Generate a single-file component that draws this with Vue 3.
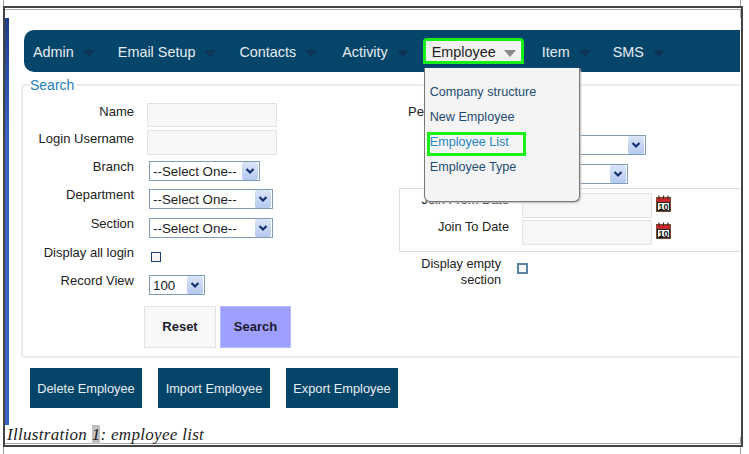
<script setup>
const navItems = [
  { label: 'Admin', gap: 23 },
  { label: 'Email Setup', gap: 23 },
  { label: 'Contacts', gap: 25 },
  { label: 'Activity', gap: 14 },
  { label: 'Employee', gap: 18, active: true },
  { label: 'Item', gap: 22 },
  { label: 'SMS', gap: 0 },
]
const menu = [
  { label: 'Company structure' },
  { label: 'New Employee' },
  { label: 'Employee List', current: true },
  { label: 'Employee Type' },
]
const actions = ['Delete Employee', 'Import Employee', 'Export Employee']
</script>

<template>
  <div class="page">
    <div class="frame">
      <div class="inner">
        <div class="bar"></div>
        <main class="main">
          <nav class="nav">
            <div
              v-for="item in navItems"
              :key="item.label"
              class="nav-item"
              :class="{ active: item.active }"
              :style="{ marginRight: item.gap + 'px' }"
            >
              <span class="nav-text">{{ item.label }}</span>
              <i class="tri"></i>
              <div v-if="item.active" class="drop">
                <a
                  v-for="m in menu"
                  :key="m.label"
                  class="drop-item"
                  :class="{ current: m.current }"
                >{{ m.label }}</a>
              </div>
            </div>
          </nav>

          <fieldset class="search">
            <legend>Search</legend>
            <div class="cols">
              <div class="col-left">
                <div class="row h27"><label>Name</label><div class="input"></div></div>
                <div class="row h31"><label>Login Username</label><div class="input tall"></div></div>
                <div class="row h28 up">
                  <label>Branch</label>
                  <div class="select w111"><span>--Select One--</span><b class="arrow"><svg viewBox="0 0 16 18" width="16" height="18"><path d="M4.5 7l3.5 3.5L11.500 7" fill="none" stroke="#13306e" stroke-width="2.200"/></svg></b></div>
                </div>
                <div class="row h29 up">
                  <label>Department</label>
                  <div class="select w124"><span>--Select One--</span><b class="arrow"><svg viewBox="0 0 16 18" width="16" height="18"><path d="M4.5 7l3.5 3.5L11.500 7" fill="none" stroke="#13306e" stroke-width="2.200"/></svg></b></div>
                </div>
                <div class="row h29 up">
                  <label>Section</label>
                  <div class="select w124"><span>--Select One--</span><b class="arrow"><svg viewBox="0 0 16 18" width="16" height="18"><path d="M4.5 7l3.5 3.5L11.500 7" fill="none" stroke="#13306e" stroke-width="2.200"/></svg></b></div>
                </div>
                <div class="row h28 up">
                  <label>Display all login</label>
                  <div class="check left-check"></div>
                </div>
                <div class="row h31 up">
                  <label>Record View</label>
                  <div class="select w56"><span>100</span><b class="arrow"><svg viewBox="0 0 16 18" width="16" height="18"><path d="M4.5 7l3.5 3.5L11.500 7" fill="none" stroke="#13306e" stroke-width="2.200"/></svg></b></div>
                </div>
                <div class="btns">
                  <button class="btn reset">Reset</button>
                  <button class="btn go">Search</button>
                </div>
              </div>

              <div class="col-right">
                <div class="r1"><label>Pe</label></div>
                <div class="r2">
                  <div class="select w153"><span>--Select One--</span><b class="arrow"><svg viewBox="0 0 16 18" width="16" height="18"><path d="M4.5 7l3.5 3.5L11.500 7" fill="none" stroke="#13306e" stroke-width="2.200"/></svg></b></div>
                </div>
                <div class="r3">
                  <div class="select w135"><span>--Select One--</span><b class="arrow"><svg viewBox="0 0 16 18" width="16" height="18"><path d="M4.5 7l3.5 3.5L11.500 7" fill="none" stroke="#13306e" stroke-width="2.200"/></svg></b></div>
                </div>
                <div class="dates">
                  <div class="date-row">
                    <label>Join From Date</label><div class="input tall"></div>
                    <svg class="cal" viewBox="0 0 15 17" width="15" height="17"><rect x=".5" y="2.500" width="14" height="14" fill="#fff" stroke="#7a4a30"/><rect x="1" y="3" width="13" height="4" fill="#c8252c"/><path d="M3 .5v3.500M7.500 .5v3.500M12 .5v3.500" stroke="#4a2a22" stroke-width="1.300"/><rect x="1.500" y="7.500" width="12" height="8" fill="#fff" stroke="#222"/><text x="7.500" y="15" text-anchor="middle" class="cal-t">10</text></svg>
                  </div>
                  <div class="date-row">
                    <label>Join To Date</label><div class="input tall"></div>
                    <svg class="cal" viewBox="0 0 15 17" width="15" height="17"><rect x=".5" y="2.500" width="14" height="14" fill="#fff" stroke="#7a4a30"/><rect x="1" y="3" width="13" height="4" fill="#c8252c"/><path d="M3 .5v3.500M7.500 .5v3.500M12 .5v3.500" stroke="#4a2a22" stroke-width="1.300"/><rect x="1.500" y="7.500" width="12" height="8" fill="#fff" stroke="#222"/><text x="7.500" y="15" text-anchor="middle" class="cal-t">10</text></svg>
                  </div>
                </div>
                <div class="empty">
                  <label>Display empty<br />section</label>
                  <div class="check blue-check"></div>
                </div>
              </div>
            </div>
          </fieldset>

          <div class="actions">
            <button v-for="a in actions" :key="a" class="action">{{ a }}</button>
          </div>
        </main>
      </div>
      <div class="caption"><em>Illustration <span class="num">1</span>: employee list</em></div>
    </div>
  </div>
</template>

<style>
html, body { margin: 0; background: #fff; overflow: hidden; }
</style>

<style scoped>
.page {
  box-sizing: border-box;
  width: 738px;
  height: 454px;
  margin-left: 3px;
  padding-top: 6px;
  border-left: 1px solid #999;
  border-right: 1px solid #999;
  font-family: "Liberation Sans", Arial, sans-serif;
  font-size: 13px;
  color: #222;
}
.frame {
  box-sizing: border-box;
  position: relative;
  height: 441px;
  margin: 0 -3px 0 -1px;
  border: 2px solid #444;
  background: #fff;
}
.inner {
  display: flex;
  box-sizing: border-box;
  height: 435px;
  border: 1px solid #aaa;
  border-width: 1px 1px 0 0;
  margin-top: 1px;
  padding-top: 8px;
}
.bar {
  flex: none;
  width: 4px;
  height: 407px;
  background: linear-gradient(#1c3f8a, #3a64c4 30%, #3a64c4);
}
.main {
  flex: 1;
  min-width: 0;
  height: 407px;
  padding: 12px 0 0 15px;
  margin-right: -1px;
  background: #fff;
}
.nav {
  box-sizing: border-box;
  display: flex;
  align-items: center;
  height: 42px;
  padding-left: 9px;
  margin-right: 1px;
  background: #05456a;
  border-radius: 10px 0 0 10px;
  color: #e6edf2;
  font-size: 14.400px;
}
.nav-item { position: relative; display: flex; align-items: center; }
.nav-text { padding-top: 2px; }
.tri {
  display: block;
  width: 0;
  height: 0;
  margin-left: 9px;
  margin-top: 5px;
  border-style: solid;
  border-width: 7px 6.500px 0;
  border-color: #0e3556 transparent transparent;
}
.active {
  box-sizing: border-box;
  height: 26px;
  padding: 0 5px 0 6px;
  border: 3px solid #18f018;
  border-radius: 4px 4px 0 0;
  background: #f2f2f2;
  color: #222;
}
.active .tri { border-top-color: #888; margin-left: 8px; }
.drop {
  position: absolute;
  z-index: 2;
  top: 27px;
  left: -2px;
  box-sizing: border-box;
  width: 156px;
  height: 134px;
  padding: 14px 0 0 3px;
  background: #f4f4f4;
  border: 1px solid #777;
  border-top: 0;
  border-radius: 0 0 6px 6px;
  box-shadow: 1px 1px 2px #bbb;
}
.drop-item {
  display: block;
  box-sizing: border-box;
  width: 99px;
  height: 25px;
  padding: 1px 0 0 3px;
  margin-left: -1px;
  font-size: 12.600px;
  line-height: 18px;
  white-space: nowrap;
  color: #1c4c72;
}
.current {
  height: 24px;
  margin-bottom: 1px;
  padding: 0;
  border: 3px solid #18f018;
  line-height: 14px;
  color: #2a86c4;
}
.search {
  box-sizing: border-box;
  height: 281px;
  margin: 5px 1px 0 -3px;
  padding: 10px 0 0 0;
  border: 2px solid #ececec;
  border-right: 0;
  border-radius: 4px 0 0 4px;
  min-width: 0;
}
legend {
  margin-left: 7px;
  padding: 0 2px 0 0;
  font-size: 14px;
  line-height: 16px;
  color: #2a80b9;
}
.cols { display: flex; }
.col-left { flex: none; width: 376px; }
.col-right { flex: 1; min-width: 0; }
label {
  font-size: 13px;
  line-height: 16px;
  color: #222;
}
.row {
  display: grid;
  grid-template-columns: 111px auto;
  column-gap: 13px;
  justify-content: start;
  align-items: start;
}
.row label { text-align: right; white-space: nowrap; justify-self: end; margin-top: 1px; }
.row.up label { margin-top: -2px; }
.h27 { height: 27px; }
.h28 { height: 28px; }
.h29 { height: 29px; }
.h31 { height: 31px; }
.input {
  box-sizing: border-box;
  width: 130px;
  height: 24px;
  background: #f7f7f7;
  border: 1px solid #e4e4e4;
}
.tall { height: 25px; }
.select {
  box-sizing: border-box;
  display: flex;
  align-items: center;
  justify-content: space-between;
  height: 20px;
  margin-left: 2px;
  padding: 0 1px 0 3px;
  background: #fff;
  border: 1px solid #7f9db9;
  font-size: 13.330px;
  color: #222;
  white-space: nowrap;
}
.arrow {
  display: block;
  width: 16px;
  height: 18px;
  background: linear-gradient(#dbe5f8, #b5c8ef);
  border-radius: 2px;
}
.arrow svg { display: block; }
.w56 { width: 56px; }
.w111 { width: 111px; }
.w124 { width: 124px; }
.w135 { width: 135px; }
.w153 { width: 153px; }
.check {
  box-sizing: border-box;
  width: 10px;
  height: 10px;
  border: 1px solid #1c3f6e;
  background: #f6f6f6;
}
.left-check { margin: 5px 0 0 4px; }
.btns { display: flex; gap: 4px; margin-left: 121px; }
.btn {
  box-sizing: border-box;
  width: 72px;
  height: 42px;
  padding: 0 0 2px;
  font: bold 13px "Liberation Sans", Arial, sans-serif;
  color: #1c1c2c;
  border: 1px solid #e4e4e4;
}
.reset { background: #f8f8f8; }
.go { width: 71px; background: #9f9fff; border-color: #b9b9ff; }
.r1 { height: 31px; padding-left: 9px; }
.r1 label { display: block; white-space: nowrap; margin-top: 1px; }
.r2 { height: 29px; margin-left: 94px; }
.r3 { height: 24px; margin-left: 94px; }
.r2 .select, .r3 .select { margin-left: 0; }
.dates {
  box-sizing: border-box;
  height: 64px;
  padding: 4px 0 0;
  border: solid #ddd;
  border-width: 1px 0 1px 1px;
}
.date-row {
  display: grid;
  grid-template-columns: 109px 13px 130px 4px 15px;
  height: 27px;
}
.date-row label { text-align: right; grid-column: 1; white-space: nowrap; justify-self: end; margin-top: -1px; font-size: 12.800px; }
.date-row .input { grid-column: 3; }
.date-row .cal { grid-column: 5; margin-top: 2px; }
.cal-t {
  font: bold 9px "Liberation Sans", Arial, sans-serif;
  fill: #111;
}
.empty {
  display: flex;
  align-items: flex-start;
  margin-top: 4px;
}
.empty label {
  width: 102px;
  text-align: right;
  font-size: 12.700px;
  line-height: 16px;
}
.blue-check { margin: 7px 0 0 16px; border: 2px solid #5b83a5; width: 11px; height: 11px; }
.actions { display: flex; gap: 16px; margin: 10px 0 0 6px; }
.action {
  box-sizing: border-box;
  width: 112px;
  height: 40px;
  padding: 0;
  background: #05456a;
  border: 0;
  font: 12.800px "Liberation Sans", Arial, sans-serif;
  color: #e6edf2;
}
.caption {
  box-sizing: border-box;
  height: 19px;
  padding-left: 2px;
  font: italic 17px/19px "Liberation Serif", "Times New Roman", serif;
  letter-spacing: .3px;
  color: #222;
  border-bottom: 1px solid #aaa;
  margin-top: -19px;
  position: relative;
  white-space: nowrap;
}
.num { background: #c0c0c0; }
</style>
